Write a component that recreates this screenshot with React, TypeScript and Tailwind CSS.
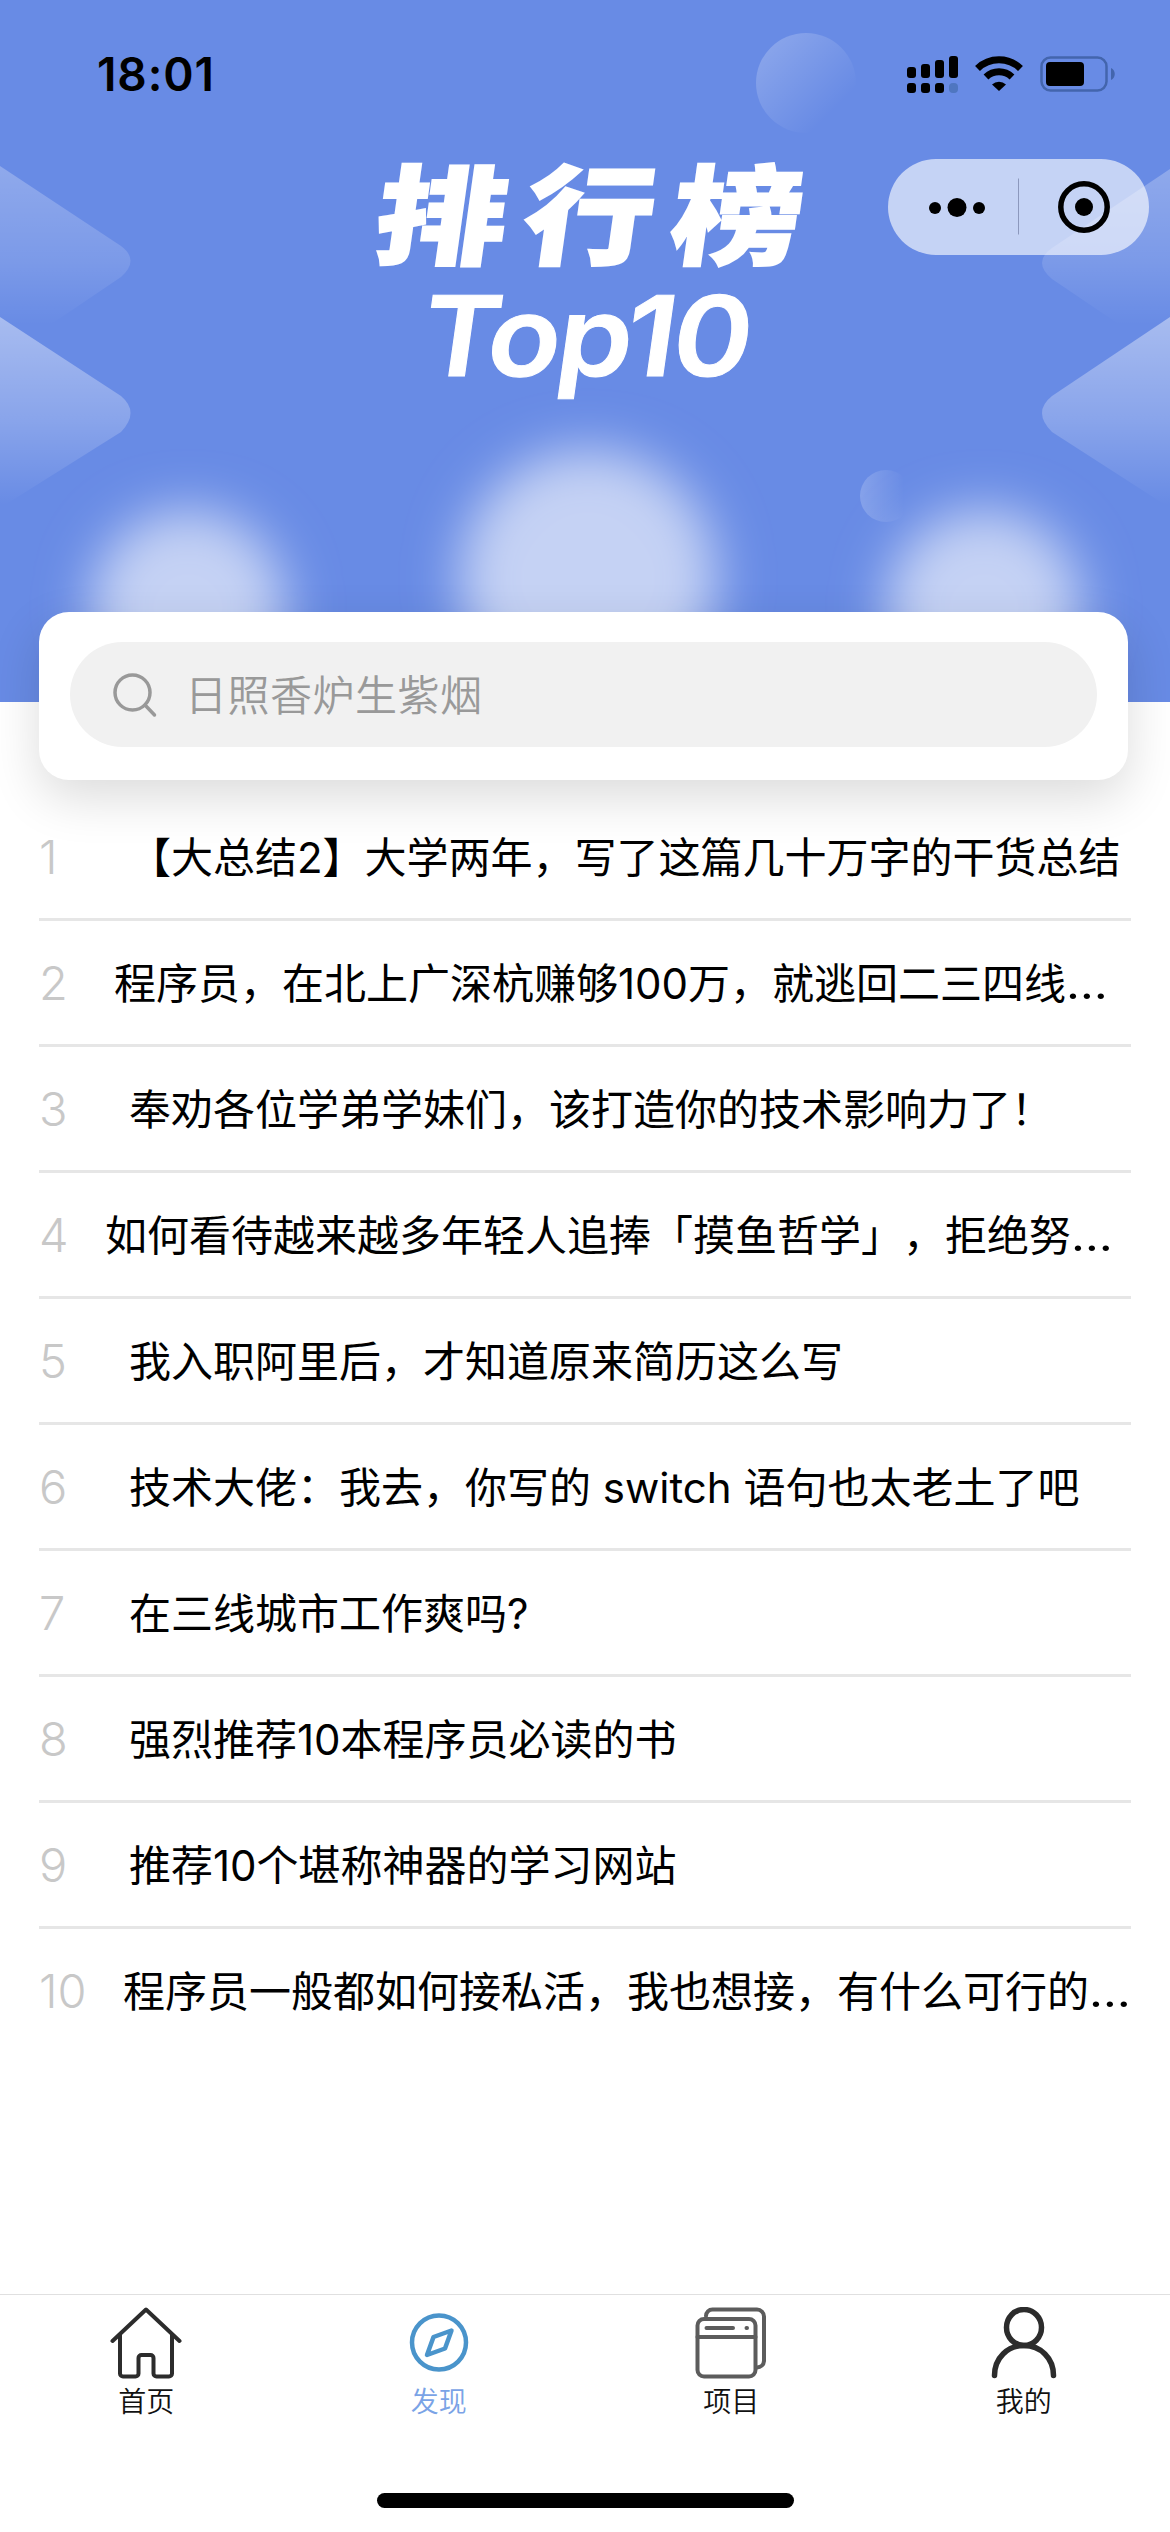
import React, { useState } from 'react'

type Article = {
    id: number
    title: string
    more?: boolean
    indent: string
}

const articles: Article[] = [
    { id: 1, title: '【大总结2】大学两年，写了这篇几十万字的干货总结', indent: 'pl-[90px]' },
    { id: 2, title: '程序员，在北上广深杭赚够100万，就逃回二三四线', more: true, indent: 'pl-[75px]' },
    { id: 3, title: '奉劝各位学弟学妹们，该打造你的技术影响力了！', indent: 'pl-[90px]' },
    { id: 4, title: '如何看待越来越多年轻人追捧「摸鱼哲学」，拒绝努', more: true, indent: 'pl-[66px]' },
    { id: 5, title: '我入职阿里后，才知道原来简历这么写', indent: 'pl-[90px]' },
    { id: 6, title: '技术大佬：我去，你写的 switch 语句也太老土了吧', indent: 'pl-[90px]' },
    { id: 7, title: '在三线城市工作爽吗?', indent: 'pl-[90px]' },
    { id: 8, title: '强烈推荐10本程序员必读的书', indent: 'pl-[90px]' },
    { id: 9, title: '推荐10个堪称神器的学习网站', indent: 'pl-[90px]' },
    { id: 10, title: '程序员一般都如何接私活，我也想接，有什么可行的', more: true, indent: 'pl-[84px]' },
]

const tabs = [
    { key: 'home', label: '首页', icon: HomeIcon },
    { key: 'find', label: '发现', icon: CompassIcon },
    { key: 'project', label: '项目', icon: ProjectIcon },
    { key: 'mine', label: '我的', icon: UserIcon },
]

function HomeIcon() {
    return (
        <svg className="h-[72px] w-[72px]" viewBox="0 0 72 72" fill="none" stroke="#2c2c2c" strokeWidth="4" strokeLinecap="round" strokeLinejoin="round">
            <path d="M2.5 34 36 2.5 69.500 34" />
            <path d="M10 28V66.500a3 3 0 0 0 3 3H25.500a3 3 0 0 0 3-3V51a3 3 0 0 1 3-3H40.500a3 3 0 0 1 3 3V66.500a3 3 0 0 0 3 3H59a3 3 0 0 0 3-3V28" />
        </svg>
    )
}

function CompassIcon() {
    return (
        <svg className="h-[72px] w-[72px]" viewBox="0 0 72 72" fill="none" stroke="#4a94cb" strokeWidth="4.500" strokeLinejoin="round">
            <circle cx="36" cy="35.500" r="27" />
            <path d="M48.500 23.500 30.500 30 24 48 42 41.500Z" />
        </svg>
    )
}

function ProjectIcon() {
    return (
        <svg className="h-[72px] w-[72px]" viewBox="0 0 72 72" fill="none" stroke="#5c5c5c" strokeWidth="4" strokeLinecap="round">
            <path d="M11 9a6.500 6.500 0 0 1 6.500-6.500H62a7 7 0 0 1 7 7V54a7 7 0 0 1-7 6.500" />
            <rect x="2.500" y="12" width="58" height="57.500" rx="6.500" />
            <path d="M2.500 30H60.500" />
            <path d="M11.500 21H38M51.500 21H52" />
        </svg>
    )
}

function UserIcon() {
    return (
        <svg className="h-[72px] w-[72px]" viewBox="0 0 72 72" fill="none" stroke="#2c2c2c" strokeWidth="5.500" strokeLinecap="round">
            <ellipse cx="36" cy="20.500" rx="17.500" ry="18" />
            <path d="M6.500 68.500C6.500 51 19.500 38.500 36 38.500S65.500 51 65.500 68.500" />
        </svg>
    )
}

function StatusBar() {
    return (
        <div className="relative flex h-[148px] items-center justify-between pr-[54px] pl-[97px]">
            <span className="font-['Inter'] text-[46px] leading-none font-semibold tracking-[0.900px] text-black">18:01</span>
            <svg className="h-[40px] w-[210px]" viewBox="906 54 210 40">
                <rect x="907" y="67" width="9" height="11" rx="3" />
                <rect x="921" y="64" width="9" height="14" rx="3" />
                <rect x="935" y="60" width="9" height="18" rx="3" />
                <rect x="949" y="56" width="9" height="22" rx="3" />
                <rect x="907" y="83" width="9" height="10" rx="3" />
                <rect x="921" y="83" width="9" height="10" rx="3" />
                <rect x="935" y="83" width="9" height="10" rx="3" />
                <rect x="949" y="83" width="9" height="10" rx="4" fill="#4f76c0" />
                <g fill="none" stroke="#000" strokeWidth="7">
                    <path d="M977.500 68.500a31 31 0 0 1 43 0" />
                    <path d="M986 77a19 19 0 0 1 26 0" />
                </g>
                <path d="M992 84.500a10.500 10.500 0 0 1 14 0l-7 6.500Z" />
                <rect x="1041.500" y="57.500" width="65" height="33" rx="9" fill="none" stroke="#4365ad" strokeWidth="2.500" />
                <rect x="1046" y="62" width="38" height="24" rx="4" />
                <path d="M1111 68v12c5-2 5-10 0-12Z" fill="#4365ad" />
            </svg>
        </div>
    )
}

function Capsule() {
    return (
        <div className="absolute top-[159px] right-[21px] flex h-[96px] w-[261px] items-center rounded-full bg-white/62">
            <svg className="h-full w-full" viewBox="0 0 261 96">
                <circle cx="47" cy="49" r="6" />
                <circle cx="69" cy="48.500" r="9.500" />
                <circle cx="91" cy="49" r="6" />
                <path d="M130.500 19.500v56" stroke="#8c98bd" strokeWidth="1" />
                <circle cx="196" cy="48" r="23.200" fill="none" stroke="#000" strokeWidth="5.500" />
                <circle cx="196" cy="48" r="9" />
            </svg>
        </div>
    )
}

function HeaderArt() {
    return (
        <svg className="absolute inset-0 h-full w-full" viewBox="0 0 1170 702">
            <defs>
                <linearGradient id="wedgeA" x1="0" y1="166" x2="0" y2="325" gradientUnits="userSpaceOnUse">
                    <stop offset="0" stopColor="#fff" stopOpacity="0.260" />
                    <stop offset="0.600" stopColor="#fff" stopOpacity="0.130" />
                    <stop offset="1" stopColor="#fff" stopOpacity="0" />
                </linearGradient>
                <linearGradient id="wedgeB" x1="0" y1="317" x2="0" y2="505" gradientUnits="userSpaceOnUse">
                    <stop offset="0" stopColor="#fff" stopOpacity="0.420" />
                    <stop offset="0.550" stopColor="#fff" stopOpacity="0.220" />
                    <stop offset="1" stopColor="#fff" stopOpacity="0" />
                </linearGradient>
                <linearGradient id="ballA" x1="0.100" y1="0.150" x2="0.750" y2="0.800">
                    <stop offset="0" stopColor="#fff" stopOpacity="0.220" />
                    <stop offset="1" stopColor="#fff" stopOpacity="0" />
                </linearGradient>
                <linearGradient id="ballB" x1="0" y1="0.500" x2="0.850" y2="0.500">
                    <stop offset="0" stopColor="#fff" stopOpacity="0.200" />
                    <stop offset="1" stopColor="#fff" stopOpacity="0" />
                </linearGradient>
                <filter id="soft" x="-50%" y="-50%" width="200%" height="200%">
                    <feGaussianBlur stdDeviation="26" />
                </filter>
            </defs>
            <path d="M0 166 121 246Q140 260 121 277L50 325H0Z" fill="url(#wedgeA)" />
            <path d="M0 317 121 396Q140 412 121 432L0 508Z" fill="url(#wedgeB)" />
            <path d="M1170 169 1052 248Q1032 262 1052 279L1120 325H1170Z" fill="url(#wedgeA)" />
            <path d="M1170 317 1052 396Q1032 412 1052 432L1170 508Z" fill="url(#wedgeB)" />
            <circle cx="806" cy="83" r="50" fill="url(#ballA)" />
            <circle cx="886" cy="496" r="26" fill="url(#ballB)" />
            <g fill="#c5d2f4" filter="url(#soft)">
                <circle cx="188" cy="607" r="98" />
                <circle cx="588" cy="578" r="129" />
                <circle cx="984" cy="607" r="98" />
            </g>
        </svg>
    )
}

function Header() {
    return (
        <header className="relative h-[702px] overflow-hidden bg-[#688be5]">
            <HeaderArt />
            <StatusBar />
            <Capsule />
            <div className="relative flex -skew-x-8 flex-col items-center text-white">
                <h1 className="mt-[6px] mr-[-12px] scale-x-121 text-[108px] leading-[126px] font-extrabold tracking-[14px] [-webkit-text-stroke:2px_white]">
                    排行榜
                </h1>
                <p className="mt-[1px] mr-[-20px] scale-x-108 font-['Inter'] text-[111px] leading-[110px] font-semibold tracking-[-3px] [-webkit-text-stroke:1px_white]">
                    Top10
                </p>
            </div>
        </header>
    )
}

function SearchCard() {
    return (
        <div className="relative z-10 mt-[-90px] mr-[42px] ml-[39px] h-[168px] rounded-[30px] bg-white px-[31px] pt-[30px] shadow-[0_18px_50px_rgba(0,0,0,0.14)]">
            <div className="flex h-[105px] items-center rounded-full bg-[#f1f1f1] pl-[42px]">
                <svg className="h-[46px] w-[46px]" viewBox="0 0 46 46" fill="none" stroke="#999" strokeWidth="3.500" strokeLinecap="round">
                    <circle cx="20.500" cy="20.500" r="17.500" />
                    <path d="m33 33 9.500 10" />
                </svg>
                <span className="mt-[3px] ml-[27px] text-[42px] leading-none font-[350] tracking-[0.500px] text-[#999]">日照香炉生紫烟</span>
            </div>
        </div>
    )
}

export default function App() {
    const [active, setActive] = useState('find')

    return (
        <div
            lang="zh-CN"
            className="flex h-[2532px] w-[1170px] flex-col overflow-hidden bg-white font-['Inter','Noto_Sans_CJK_SC',sans-serif] [text-spacing-trim:space-all]"
        >
            <Header />
            <SearchCard />

            <ul className="mt-[15px] mr-[39px] ml-[39px]">
                {articles.map((a) => (
                    <li key={a.id} className="relative flex h-[126px] items-center border-b-[3px] border-[#e6e6e6] last:border-transparent">
                        <span className="absolute left-0 text-[47px] leading-none font-light text-[#c8c8c8]">{a.id}</span>
                        <span className={`mt-[2px] text-[42px] leading-none font-[370] whitespace-nowrap text-black ${a.indent}`}>
                            {a.title}
                            {a.more && <span className="inline-block origin-left scale-x-115">…</span>}
                        </span>
                    </li>
                ))}
            </ul>

            <nav className="mt-auto h-[238px] border-t border-[#e0e0e0]">
                <div className="grid grid-cols-4 pt-[12px]">
                    {tabs.map((t) => (
                        <button key={t.key} onClick={() => setActive(t.key)} className="flex flex-col items-center">
                            <t.icon />
                            <span className={`mt-[9px] text-[28px] leading-[28px] font-[350] ${active === t.key ? 'text-[#7aa3e6]' : 'text-[#111]'}`}>
                                {t.label}
                            </span>
                        </button>
                    ))}
                </div>
                <div className="mx-auto mt-[77px] h-[15px] w-[417px] rounded-full bg-black" />
            </nav>
        </div>
    )
}
